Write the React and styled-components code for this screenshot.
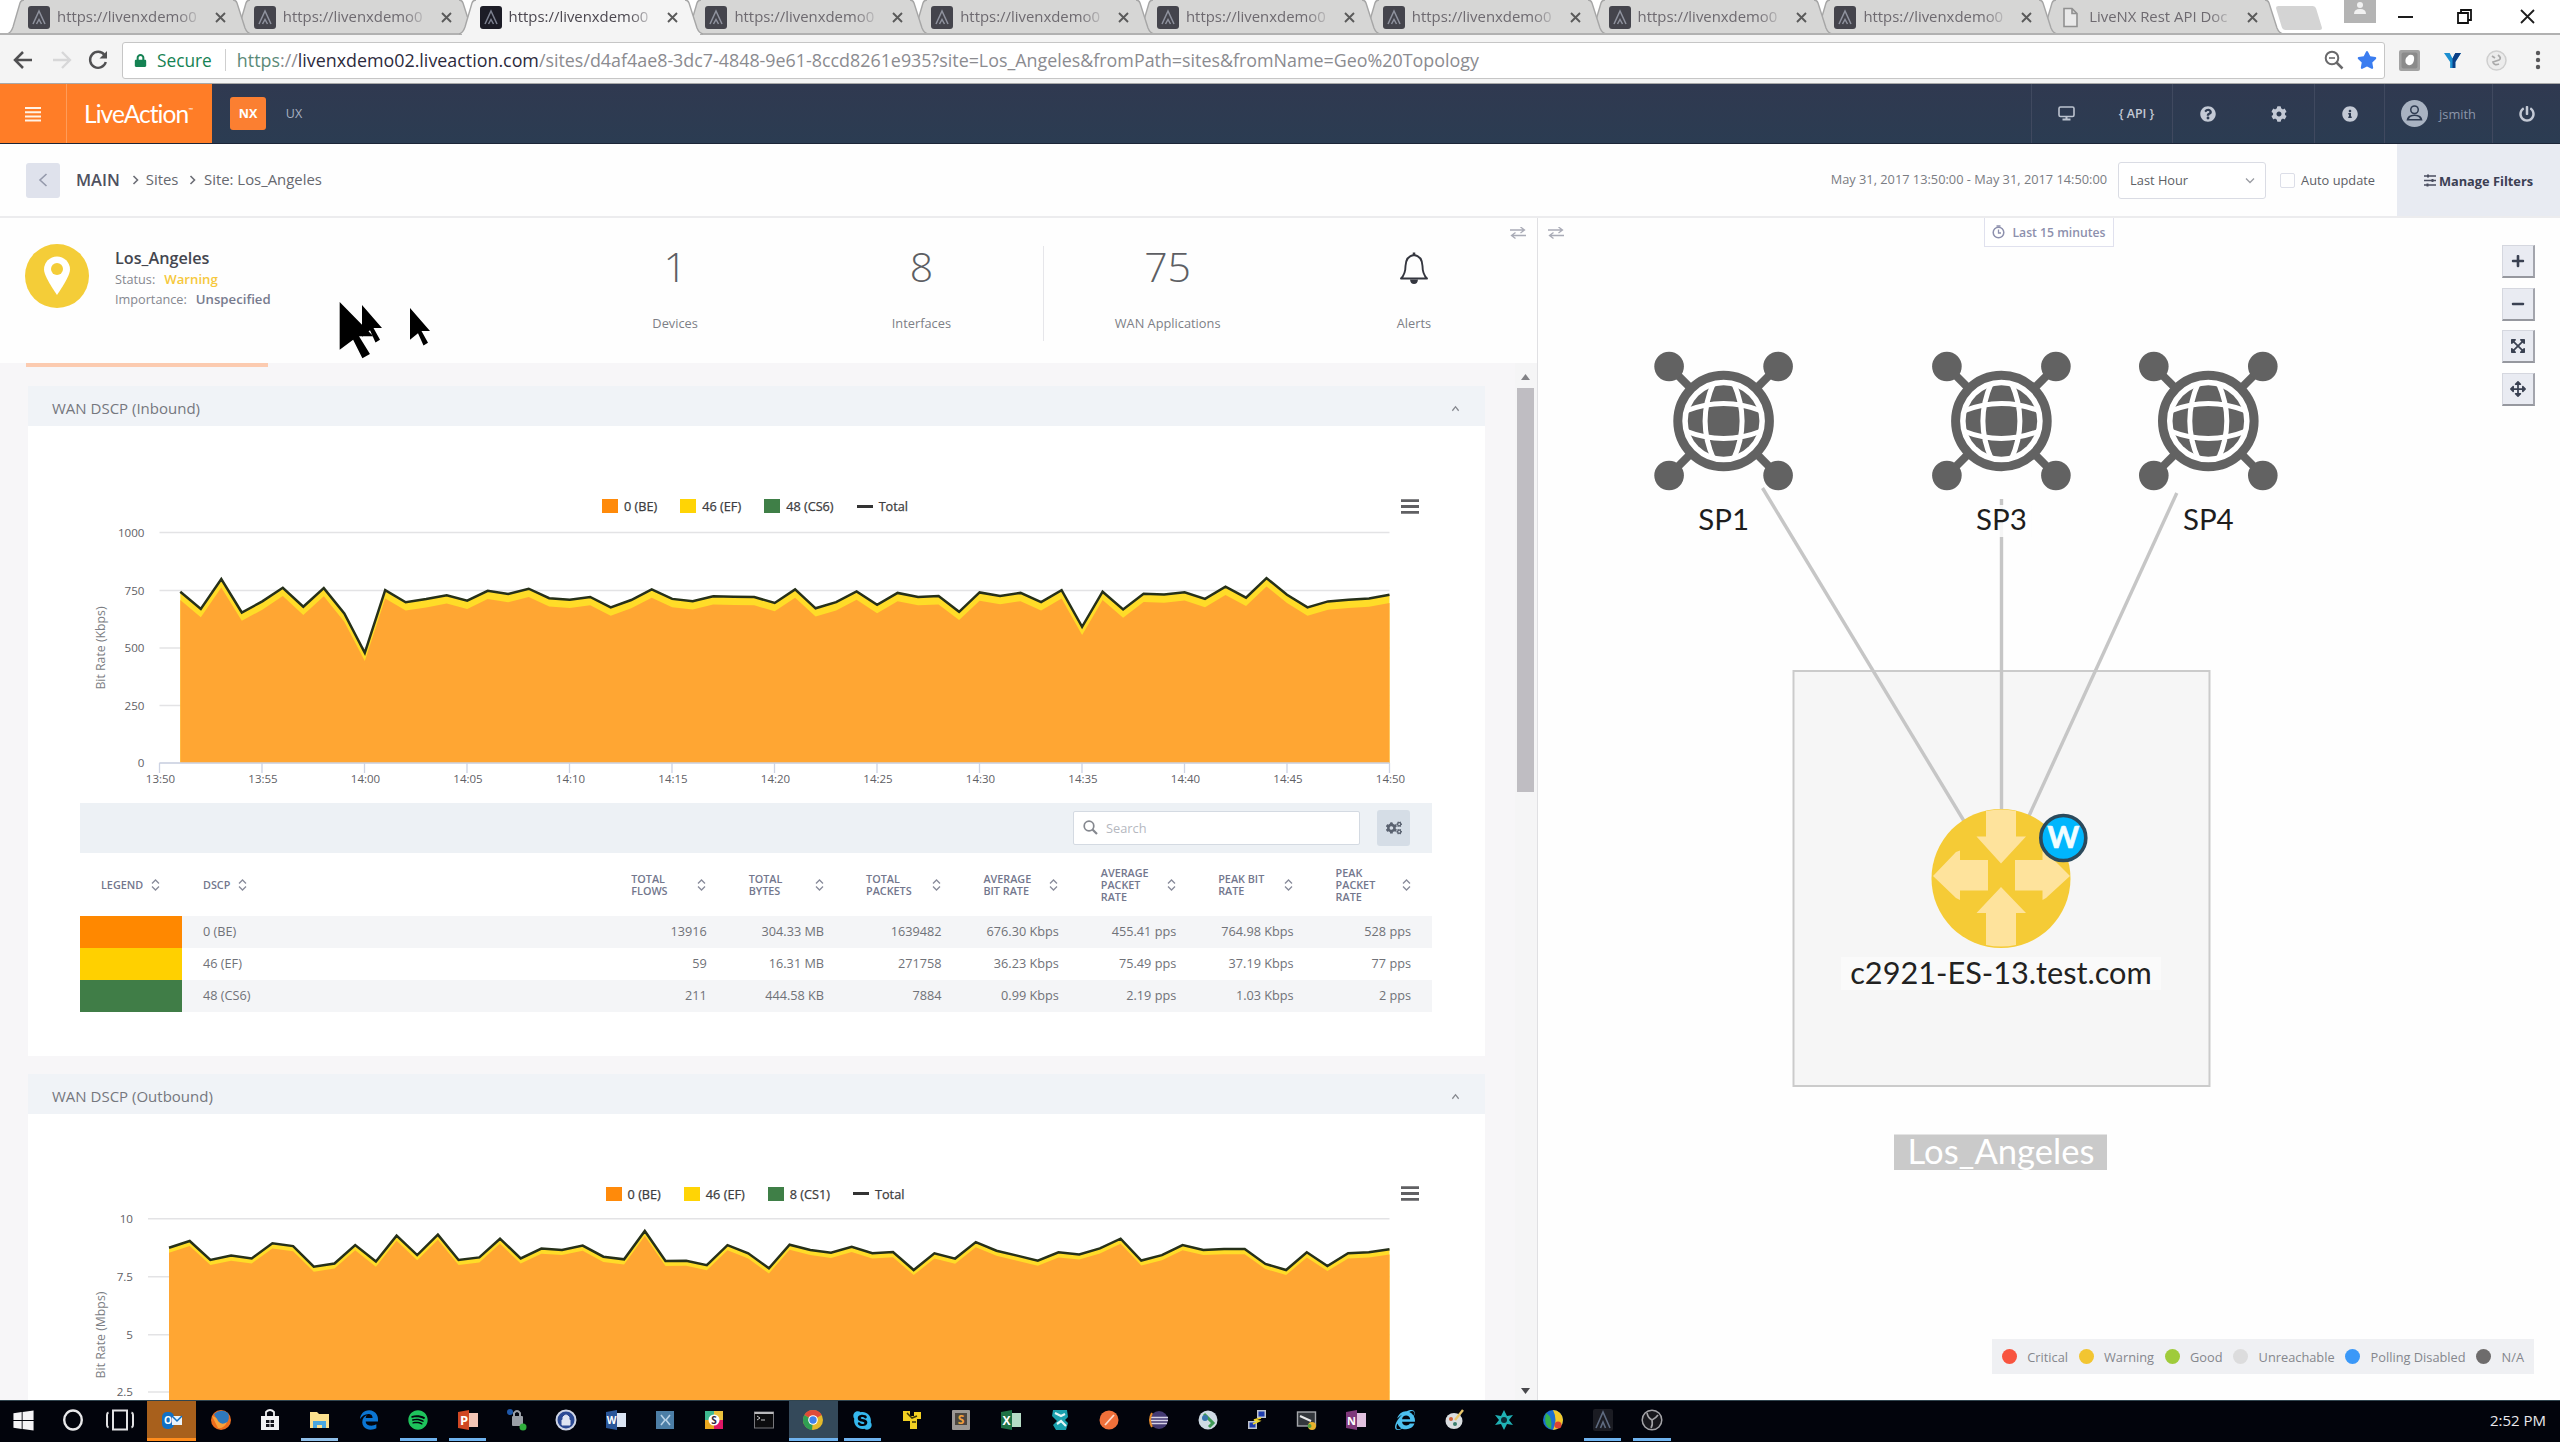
import React from 'react';
import styled, { createGlobalStyle, css } from 'styled-components';
import {
  FaLock, FaStar, FaQuestionCircle, FaCog, FaInfoCircle, FaPowerOff, FaCogs, FaPlus, FaMinus,
  FaExpandArrowsAlt, FaArrowsAlt, FaWindows, FaEdgeLegacy, FaSpotify, FaSkype, FaInternetExplorer,
} from 'react-icons/fa';

const Global = createGlobalStyle`
  *, *::before, *::after { box-sizing: border-box; }
  body { margin: 0; overflow: hidden; background: #fff; }
`;

const Screen = styled.div`
  position: relative;
  width: 2560px;
  height: 1442px;
  display: flex;
  flex-direction: column;
  overflow: hidden;
  background: #fefefe;
  color: #5d5f66;
  font-family: "Open Sans", "Noto Sans", sans-serif;
  font-size: 12.8px;
  white-space: nowrap;
`;

/* ---------- browser tabs ---------- */
const TabStrip = styled.div`
  flex: none;
  height: 35px;
  display: flex;
  padding-left: 7px;
  background: #fff;
  border-bottom: 2px solid #b1b1b1;
`;
const TabBox = styled.div`
  position: relative;
  flex: none;
  width: 225.8px;
  height: 34px;
  display: flex;
  align-items: center;
  padding-left: 21px;
  gap: 7px;
  z-index: ${(p) => p.$z};
  color: ${(p) => (p.$active ? '#4c4850' : '#6e6a70')};
`;
const TabShape = styled.svg`
  position: absolute;
  left: 0;
  top: 0;
  z-index: -1;
`;
const Favicon = styled.svg`
  flex: none;
  opacity: ${(p) => (p.$active ? 1 : 0.78)};
`;
const TabTitle = styled.span`
  width: 143px;
  height: 34px;
  font-size: 14.9px;
  line-height: 32px;
  mask-image: linear-gradient(90deg, #000 84%, rgba(0, 0, 0, 0.15) 100%);
`;
const TabClose = styled.svg`
  margin-left: 8px;
`;
const NewTab = styled.div`
  width: 40px;
  height: 24px;
  margin: 6px 0 0 14px;
  background: #d4d4d4;
  border-radius: 3px;
  transform: skewX(17deg);
`;
const WindowControls = styled.div`
  margin-left: auto;
  display: flex;
  align-items: flex-start;
  padding-right: 25px;
`;
const ProfileBox = styled.div`
  width: 32px;
  height: 23px;
  margin-right: 22px;
  background: #b4b4b4;
  display: flex;
  justify-content: center;
`;
const ControlIcon = styled.svg`
  margin: 9px ${(p) => p.$gap}px 0 0;
`;

/* ---------- browser toolbar ---------- */
const BrowserBar = styled.div`
  flex: none;
  height: 49px;
  display: flex;
  align-items: center;
  padding: 2px 15px 0 13px;
  background: #f4f4f4;
  border-bottom: 1px solid #a8a8a8;
`;
const NavIcon = styled.svg`
  flex: none;
  margin-right: ${(p) => p.$gap}px;
`;
const UrlField = styled.div`
  width: 2263px;
  height: 37px;
  display: flex;
  align-items: center;
  padding: 0 7px 0 11px;
  background: #fff;
  border: 1px solid #c6c6c6;
  border-radius: 3px;
  font-size: 17.88px;
`;
const SecureText = styled.span`
  margin-left: 10px;
  font-size: 17.3px;
  color: #158253;
`;
const UrlRule = styled.span`
  width: 1px;
  height: 22px;
  margin: 0 11px 0 13px;
  background: #cfcfcf;
`;
const UrlText = styled.span`
  color: #8b8b90;
  b { font-weight: 400; color: #2c2a3c; }
  i { font-style: normal; color: #5b8a78; }
`;
const FieldIcons = styled.div`
  margin-left: auto;
  display: flex;
  align-items: center;
  gap: 13px;
  color: #3b7df0;
`;
const Extensions = styled.div`
  margin-left: 14px;
  flex: 1;
  display: flex;
  align-items: center;
  justify-content: space-between;
`;

/* ---------- application header ---------- */
const AppHeader = styled.header`
  flex: none;
  height: 60px;
  display: flex;
  background: linear-gradient(#303950, #2b3c52);
  border-bottom: 1px solid #1c2537;
  color: #c3c9d5;
`;
const MenuButton = styled.div`
  width: 66px;
  display: flex;
  align-items: center;
  justify-content: center;
  background: #ff7d27;
`;
const Logo = styled.div`
  width: 146px;
  padding-left: 17px;
  background: #ff7d27;
  border-left: 1px solid #ff9c59;
  color: #fff;
  font: 400 24.5px/60px Lato, sans-serif;
  letter-spacing: -0.95px;
  sup { font-size: 6px; line-height: 0; vertical-align: 11px; letter-spacing: 0; }
`;
const ModeTab = styled.div`
  align-self: center;
  margin-left: ${(p) => (p.$active ? 18 : 10)}px;
  width: 36px;
  height: 33px;
  border-radius: 3px;
  background: ${(p) => (p.$active ? '#fb7f31' : 'transparent')};
  color: ${(p) => (p.$active ? '#fff' : '#a9b1c1')};
  font-size: 12.5px;
  font-weight: ${(p) => (p.$active ? 700 : 400)};
  line-height: 33px;
  text-align: center;
`;
const HeaderActions = styled.div`
  margin-left: auto;
  display: flex;
`;
const Action = styled.div`
  width: ${(p) => p.$w}px;
  display: flex;
  align-items: center;
  justify-content: center;
  gap: 11px;
  ${(p) => p.$rule && css`border-left: 1px solid #40495f;`}
`;
const ApiText = styled.span`
  font-size: 12.4px;
  font-weight: 600;
`;
const UserName = styled.span`
  color: #8c96aa;
`;

/* ---------- breadcrumb bar ---------- */
const CrumbBar = styled.div`
  flex: none;
  height: 74px;
  display: flex;
  align-items: center;
  padding-left: 26px;
  border-bottom: 2px solid #ececee;
`;
const BackButton = styled.div`
  width: 34px;
  height: 35px;
  margin-right: 16px;
  display: flex;
  align-items: center;
  justify-content: center;
  background: #dfe2ec;
  border-radius: 3px;
`;
const Crumb = styled.span`
  padding-bottom: 2px;
  font-size: ${(p) => (p.$main ? 16.4 : 14.9)}px;
  font-weight: ${(p) => (p.$main ? 600 : 400)};
  color: ${(p) => (p.$main ? '#4f5160' : '#66686f')};
`;
const CrumbArrow = styled.svg`
  margin: 0 ${(p) => p.$r}px 0 ${(p) => p.$l}px;
`;
const CrumbRight = styled.div`
  margin-left: auto;
  height: 100%;
  display: flex;
  align-items: center;
`;
const RangeText = styled.span`
  padding-bottom: 2px;
  color: #7a7c82;
`;
const Select = styled.div`
  width: 148px;
  height: 37px;
  margin: 0 14px 0 11px;
  padding: 0 10px 0 11px;
  display: flex;
  align-items: center;
  justify-content: space-between;
  border: 1px solid #dadce4;
  border-radius: 3px;
  background: #fff;
`;
const Checkbox = styled.span`
  width: 15px;
  height: 15px;
  margin-right: 6px;
  border: 1px solid #dcdee8;
  border-radius: 2px;
`;
const ManageFilters = styled.div`
  width: 163px;
  height: 100%;
  margin-left: 22px;
  display: flex;
  align-items: center;
  justify-content: center;
  gap: 3px;
  padding: 1px 0 0 0;
  background: #e8ebf2;
  color: #3c4054;
  font-size: 12.8px;
  font-weight: 700;
`;

/* ---------- site summary ---------- */
const Main = styled.main`
  flex: 1;
  min-height: 0;
  display: flex;
`;
const LeftPane = styled.section`
  position: relative;
  flex: none;
  width: 1538px;
  display: flex;
  flex-direction: column;
  border-right: 1px solid #e0e0e3;
`;
const Summary = styled.div`
  flex: none;
  height: 145px;
  display: flex;
  background: #fefefe;
`;
const SiteCard = styled.div`
  width: 552px;
  display: flex;
  padding: 26px 0 0 25px;
  gap: 26px;
`;
const SiteText = styled.div`
  padding-top: 3px;
  display: flex;
  flex-direction: column;
`;
const SiteName = styled.div`
  font-size: 16.2px;
  font-weight: 600;
  line-height: 22px;
  color: #44464f;
`;
const SiteLine = styled.div`
  display: flex;
  gap: 9px;
  font-size: 12.7px;
  line-height: 20px;
  color: #85878f;
`;
const SiteValue = styled.span`
  font-size: 13.2px;
  font-weight: 600;
  color: ${(p) => p.$color};
`;
const Stat = styled.div`
  flex: 1;
  display: flex;
  flex-direction: column;
  align-items: center;
  position: relative;
  color: #7d7f86;
  &:nth-child(4)::before {
    content: "";
    position: absolute;
    left: -2px;
    top: 28px;
    height: 95px;
    border-left: 1px solid #e6e6ea;
  }
`;
const StatValue = styled.div`
  height: 63px;
  margin-top: 20px;
  font-size: 41px;
  font-weight: 300;
  line-height: 56px;
  color: #5d5e63;
  svg { margin-top: 13px; display: block; }
`;
const StatLabel = styled.div`
  line-height: 44px;
`;
const SwapMark = styled.svg`
  position: absolute;
  top: 9px;
  ${(p) => (p.$side === 'right' ? css`right: 11px;` : css`left: 10px;`)}
`;
const Cursor = styled.svg`
  position: absolute;
  left: ${(p) => p.$x}px;
  top: ${(p) => p.$y}px;
  z-index: 30;
`;

/* ---------- scrolling reports ---------- */
const Scroller = styled.div`
  flex: 1;
  min-height: 0;
  display: flex;
  background: #f7f6f8;
`;
const Reports = styled.div`
  width: 1515px;
  padding-left: 28px;
  padding-right: 30px;
  overflow: hidden;
`;
const ActiveLine = styled.div`
  width: 242px;
  height: 4px;
  margin-left: -2px;
  background: #fccbb0;
`;
const Panel = styled.section`
  margin-top: ${(p) => p.$gap}px;
`;
const PanelHeader = styled.div`
  height: 40px;
  display: flex;
  align-items: center;
  justify-content: space-between;
  padding: 4px 25px 0 24px;
  background: #f0f3f7;
  color: #75777e;
  font-size: 15px;
`;
const PanelBody = styled.div`
  background: #fff;
  padding-bottom: 44px;
`;
const ChartHead = styled.div`
  height: ${(p) => p.$h}px;
  padding: 66px 66px 0 0;
  display: grid;
  grid-template-columns: 1fr auto 1fr;
  align-items: center;
`;
const Legend = styled.div`
  grid-column: 2;
  display: flex;
  gap: 23px;
  margin-left: 63px;
`;
const LegendItem = styled.div`
  display: flex;
  align-items: center;
  gap: 6px;
  color: #3d3d40;
  font-size: 12.7px;
  -webkit-text-stroke: 0.25px #3d3d40;
`;
const Swatch = styled.i`
  width: 16px;
  height: ${(p) => (p.$line ? 3 : 14)}px;
  background: ${(p) => p.$color};
`;
const ChartMenu = styled.svg`
  justify-self: end;
`;
const Plot = styled.svg`
  display: block;
  font-family: "Open Sans", sans-serif;
`;

/* ---------- table ---------- */
const TableBox = styled.div`
  margin: 0 53px 0 52px;
`;
const TableTools = styled.div`
  height: 50px;
  display: flex;
  align-items: center;
  justify-content: flex-end;
  padding-right: 22px;
  gap: 17px;
  background: #edf1f5;
`;
const SearchBox = styled.div`
  width: 287px;
  height: 34px;
  padding: 0 0 1px 9px;
  display: flex;
  align-items: center;
  gap: 8px;
  background: #fff;
  border: 1px solid #d4dae2;
  border-radius: 2px;
  color: #b5b8bf;
`;
const GearButton = styled.div`
  width: 33px;
  height: 36px;
  display: flex;
  align-items: center;
  justify-content: center;
  background: #d5dde6;
  border-radius: 3px;
  color: #5a6270;
`;
const gridCols = css`
  display: grid;
  grid-template-columns: 102px 1fr repeat(7, 117.4px);
`;
const HeadRow = styled.div`
  ${gridCols}
  height: 63px;
  align-items: center;
`;
const HeadCell = styled.div`
  display: flex;
  align-items: center;
  justify-content: ${(p) => (p.$spread ? 'space-between' : 'flex-start')};
  gap: 8px;
  padding: 1px 21.5px 0 21px;
  color: #73778d;
  font-size: 10.8px;
  font-weight: 600;
  line-height: 12px;
`;
const HeadText = styled.span`
  white-space: normal;
  max-width: 54px;
`;
const Row = styled.div`
  ${gridCols}
  height: 32px;
  line-height: 30px;
  background: ${(p) => (p.$shade ? '#f4f5f7' : '#fff')};
  color: #707278;
  font-size: 12.7px;
`;
const ColorCell = styled.div`
  background: ${(p) => p.$color};
`;
const Cell = styled.div`
  padding: 0 21px;
  text-align: ${(p) => (p.$right ? 'right' : 'left')};
`;

/* ---------- scrollbar ---------- */
const ScrollTrack = styled.div`
  width: 22px;
  display: flex;
  flex-direction: column;
  align-items: center;
  background: #f5f5f6;
  padding: 11px 2px 6px 0;
`;
const Thumb = styled.div`
  width: 17px;
  height: 404px;
  margin: 8px 0 auto 0;
  background: #bfbdc2;
`;

/* ---------- topology ---------- */
const RightPane = styled.section`
  position: relative;
  flex: 1;
  background: #fefefe;
`;
const Topology = styled.svg`
  display: block;
  font-family: Lato, sans-serif;
`;
const RangeBadge = styled.div`
  position: absolute;
  left: 446px;
  top: 0;
  width: 130px;
  height: 29px;
  display: flex;
  align-items: center;
  justify-content: center;
  gap: 7px;
  background: #fff;
  border: 1px solid #e0e1ee;
  border-top: 0;
  color: #8d90ad;
  font-size: 12.2px;
  font-weight: 600;
`;
const ZoomStack = styled.div`
  position: absolute;
  right: 25px;
  top: 27px;
  display: flex;
  flex-direction: column;
  gap: 9.7px;
`;
const ZoomButton = styled.div`
  width: 33px;
  height: 33px;
  display: flex;
  align-items: center;
  justify-content: center;
  background: #e9ebf2;
  border: 1px solid #d5d7df;
  border-right: 2px solid #a3a5ad;
  border-bottom: 2px solid #96989f;
  color: #3a4152;
`;
const StatusLegend = styled.div`
  position: absolute;
  right: 26px;
  bottom: 26px;
  height: 35px;
  display: flex;
  align-items: center;
  gap: 10.8px;
  padding: 0 10px;
  background: #eff0f3;
  color: #85878d;
`;
const StatusItem = styled.div`
  display: flex;
  align-items: center;
  gap: 10.2px;
  &::before {
    content: "";
    width: 15px;
    height: 15px;
    border-radius: 50%;
    background: ${(p) => p.$color};
  }
`;

/* ---------- taskbar ---------- */
const Taskbar = styled.footer`
  flex: none;
  height: 42px;
  display: flex;
  background: #02040c;
  border-top: 1px solid #31454f;
  padding-right: 14px;
`;
const TaskItem = styled.div`
  flex: none;
  width: 49.35px;
  height: 40px;
  margin-left: ${(p) => (p.$first ? -1 : 0)}px;
  padding-bottom: 2px;
  display: flex;
  align-items: center;
  justify-content: center;
  position: relative;
  background: ${(p) => p.$bg || 'transparent'};
  &::after {
    content: "";
    position: absolute;
    bottom: 0;
    left: ${(p) => (p.$bg ? 0 : 6)}px;
    right: ${(p) => (p.$bg ? 0 : 6)}px;
    height: 3px;
    background: ${(p) => p.$line || 'transparent'};
  }
`;
const Clock = styled.div`
  margin-left: auto;
  color: #e9e9ec;
  font-size: 15px;
  line-height: 38px;
`;

/* ---------- data ---------- */
const TABS = Array.from({ length: 9 }, () => 'https://livenxdemo0');

const INBOUND = [743, 668, 798, 653, 701, 760, 678, 759, 649, 478, 750, 697, 711, 728, 704, 747, 733, 756, 715, 708, 720, 675, 707, 753, 712, 702, 723, 721, 720, 694, 753, 671, 698, 744, 686, 738, 720, 724, 656, 740, 725, 738, 698, 750, 591, 743, 666, 734, 731, 741, 712, 765, 717, 802, 730, 675, 701, 708, 714, 730];
const OUTBOUND = [8.75, 9.04, 8.22, 8.41, 8.29, 8.94, 8.82, 7.93, 8.07, 8.86, 8.15, 9.27, 8.43, 9.31, 8.22, 8.33, 9.14, 8.29, 8.71, 8.65, 8.84, 8.36, 8.25, 9.47, 8.18, 8.19, 8.0, 8.86, 8.51, 7.86, 8.88, 8.65, 8.53, 8.79, 8.51, 8.56, 7.79, 8.51, 8.28, 8.99, 8.62, 8.41, 8.19, 8.55, 8.46, 8.72, 9.14, 8.2, 8.43, 8.86, 8.65, 8.69, 8.69, 8.05, 7.79, 8.55, 7.96, 8.51, 8.55, 8.68];

const ROWS = [
  ['#ff8800', '0 (BE)', '13916', '304.33 MB', '1639482', '676.30 Kbps', '455.41 pps', '764.98 Kbps', '528 pps'],
  ['#ffd000', '46 (EF)', '59', '16.31 MB', '271758', '36.23 Kbps', '75.49 pps', '37.19 Kbps', '77 pps'],
  ['#407d47', '48 (CS6)', '211', '444.58 KB', '7884', '0.99 Kbps', '2.19 pps', '1.03 Kbps', '2 pps'],
];
const COLUMNS = ['TOTAL FLOWS', 'TOTAL BYTES', 'TOTAL PACKETS', 'AVERAGE BIT RATE', 'AVERAGE PACKET RATE', 'PEAK BIT RATE', 'PEAK PACKET RATE'];

const STATUSES = [['Critical', '#f8543f'], ['Warning', '#f2c531'], ['Good', '#9fcb3b'], ['Unreachable', '#dcdcdd'], ['Polling Disabled', '#3a98f8'], ['N/A', '#6e6c6c']];

/* ---------- pieces ---------- */
const AppFavicon = ({ active }) => (
  <Favicon width="22" height="23" viewBox="0 0 22 23" $active={active}>
    <rect width="22" height="23" rx="3" fill="#1c1c26" />
    <path d="M5 18 L11 5 L17 18 M8.5 18 L11 13.5 L13.5 18" fill="none" stroke="#7c8090" strokeWidth="1.5" />
  </Favicon>
);
const DocFavicon = () => (
  <Favicon width="22" height="23" viewBox="0 0 22 23">
    <path d="M4 2.5 H12 L17 7.500 V20.500 H4 Z M12 2.500 V7.500 H17" fill="#efefef" stroke="#7d7d7d" strokeWidth="1.6" />
  </Favicon>
);
const BrowserTab = ({ title, active, doc, z }) => (
  <TabBox $active={active} $z={z}>
    <TabShape width="244" height="35" viewBox="0 0 244 35">
      <path d="M0 34 C4 33 5 30 6 27 L13 3 Q14 0 17 0 H226 Q229 0 230 3 L238 28 Q240 33 244 34 Z" fill={active ? '#f4f4f4' : '#d6d6d5'} />
      <path d="M0 34 C4 33 5 30 6 27 L13 3 Q14 0 17 0 M226 0 Q229 0 230 3 L238 28 Q240 33 244 34" fill="none" stroke="#a6a6a6" strokeWidth="1.4" />
      {active ? <path d="M3 34.500 H241" stroke="#f4f4f4" strokeWidth="3" /> : <path d="M0 34 H244" stroke="#b1b1b1" strokeWidth="2" />}
    </TabShape>
    {doc ? <DocFavicon /> : <AppFavicon active={active} />}
    <TabTitle>{title}</TabTitle>
    <TabClose width="11" height="11" viewBox="0 0 11 11"><path d="M1 1 L10 10 M10 1 L1 10" stroke="#5a5a5a" strokeWidth="1.9" /></TabClose>
  </TabBox>
);

const Sort = () => (
  <svg width="9" height="12" viewBox="0 0 9 12"><path d="M1 4.500 L4.500 1 L8 4.500 M1 7.500 L4.500 11 L8 7.500" fill="none" stroke="#888b9a" strokeWidth="1.3" /></svg>
);
const Caret = () => (
  <svg width="9" height="7" viewBox="0 0 10 7"><path d="M1.500 6 L5 1.500 L8.500 6" fill="none" stroke="#85878e" strokeWidth="1.4" /></svg>
);
const Swap = () => (
  <>
    <path d="M0 3 H14 M10.500 0 L14.500 3 L10.500 6" fill="none" stroke="#a9abb6" strokeWidth="1.3" />
    <path d="M16 8.500 H2 M5.500 5.500 L1.500 8.500 L5.500 11.500" fill="none" stroke="#a9abb6" strokeWidth="1.3" />
  </>
);

const ChartLegend = ({ items, h }) => (
  <ChartHead $h={h}>
    <Legend>
      {items.map(([label, color]) => (
        <LegendItem key={label}><Swatch $color={color} $line={label === 'Total'} />{label}</LegendItem>
      ))}
    </Legend>
    <ChartMenu width="18" height="15" viewBox="0 0 18 15"><path d="M0 1.700 H18 M0 7.500 H18 M0 13.300 H18" stroke="#606063" strokeWidth="2.800" /></ChartMenu>
  </ChartHead>
);

function AreaPlot({ top, height, axisX, dataX, endX, zeroY, unit, values, band, yTicks, xTicks, yTitle, yTitleY, labelX, baseline }) {
  const step = (endX - dataX) / (values.length - 1);
  const pts = (shift) => values.map((v, i) => `${(dataX + i * step).toFixed(1)},${(zeroY - (v - shift) * unit).toFixed(1)}`);
  const close = ` ${endX},${zeroY} ${dataX},${zeroY}`;
  return (
    <Plot width="1457" height={height} viewBox={`28 ${top} 1457 ${height}`}>
      {yTicks.map(([label, y]) => (
        <g key={label}>
          <line x1={axisX} x2={endX} y1={y} y2={y} stroke="#e3e3e5" strokeWidth="1.5" />
          <text x={labelX} y={y + 4} textAnchor="end" fontSize="11.6" fill="#5f6166">{label}</text>
        </g>
      ))}
      <polygon points={pts(0).join(' ') + close} fill="#ffdc28" />
      <polygon points={pts(band).join(' ') + close} fill="#ffa633" />
      <polyline points={pts(0).join(' ')} fill="none" stroke="#26301a" strokeWidth="2.5" strokeLinejoin="miter" />
      {baseline && <line x1={axisX} x2={endX} y1={zeroY} y2={zeroY} stroke="#cdd3e4" strokeWidth="1.5" />}
      {xTicks.map((label, i) => {
        const x = axisX + (i * (endX - axisX)) / (xTicks.length - 1);
        return (
          <g key={label}>
            <line x1={x} x2={x} y1={zeroY} y2={zeroY + 10} stroke="#cdd3e4" strokeWidth="1.3" />
            <text x={x + 1} y={zeroY + 20} textAnchor="middle" fontSize="11.5" fill="#5f6166">{label}</text>
          </g>
        );
      })}
      <text transform={`translate(105 ${yTitleY}) rotate(-90)`} textAnchor="middle" fontSize="12.3" fill="#7c7e84">{yTitle}</text>
    </Plot>
  );
}

const Provider = ({ x, label, boxed }) => (
  <g transform={`translate(${x} 421)`}>
    {[[-54.5, -54.5], [54.5, -54.5], [-54.5, 54.5], [54.5, 54.5]].map(([dx, dy]) => (
      <g key={`${dx}${dy}`}>
        <line x1={dx} y1={dy} x2={dx * 0.6} y2={dy * 0.6} stroke="#626262" strokeWidth="8" />
        <circle cx={dx} cy={dy} r="14.800" fill="#626262" />
      </g>
    ))}
    <circle r="45.800" fill="#fff" stroke="#626262" strokeWidth="9" />
    <circle r="35.800" fill="#626262" />
    <g fill="none" stroke="#fff" strokeWidth="5">
      <path d="M-10 -38 Q-27 0 -10 38 M10 -38 Q27 0 10 38 M-38 -10 Q0 -25 38 -10 M-38 10 Q0 25 38 10" />
    </g>
    {boxed && <rect x="-30" y="84" width="60" height="32" fill="#fefefe" fillOpacity="0.85" />}
    <text y="109" textAnchor="middle" fontSize="29.500" fill="#1d1d1d">{label}</text>
  </g>
);

const TopologyMap = () => (
  <Topology width="1022" height="1182" viewBox="1538 218 1022 1182">
    <rect x="1793.500" y="671" width="416" height="415" fill="#f6f6f6" stroke="#cbcbcb" strokeWidth="2" />
    <g stroke="#c6c6c6" strokeWidth="3.4">
      <line x1="1762.500" y1="488" x2="1967" y2="826" />
      <line x1="2001.500" y1="499" x2="2001.500" y2="812" />
      <line x1="2176.800" y1="493" x2="2028" y2="818" />
    </g>
    <Provider x={1723.6} label="SP1" />
    <Provider x={2001.4} label="SP3" boxed />
    <Provider x={2208.3} label="SP4" />
    <circle cx="2001" cy="878.500" r="69.500" fill="#f5cb36" />
    <g fill="#fee39c">
      <path d="M1986 811 Q2001 808 2016 811 V836.500 H2026 L2001 863.500 L1976.500 836.500 H1986 Z" />
      <path d="M1986 945 Q2001 948 2016 945 V913 H2026 L2001 887 L1976.500 913 H1986 Z" />
      <path d="M1933 876 L1956 852 L1960 850.500 V860 H1988 V890.500 H1960 V900 L1956 898 Z" />
      <path d="M2070 876 L2046 852 L2042.500 850.500 V860 H2015 V890.500 H2042.500 V900 L2046 898 Z" />
    </g>
    <circle cx="2063.300" cy="838" r="22.500" fill="#00b6fd" stroke="#2b4a5c" strokeWidth="3.600" />
    <text x="2063.300" y="847.500" textAnchor="middle" fontSize="30.500" fontWeight="700" fill="#f2fdff" stroke="#f2fdff" strokeWidth="0.600">W</text>
    <rect x="1841" y="957" width="320" height="33" fill="#fafafa" />
    <text x="2001" y="983.500" textAnchor="middle" fontSize="30.700" fill="#222">c2921-ES-13.test.com</text>
    <rect x="1894" y="1134.500" width="213" height="35.500" fill="#cacaca" />
    <text x="2001" y="1163.500" textAnchor="middle" fontSize="34.600" fill="#fff">Los_Angeles</text>
  </Topology>
);

const CursorShape = ({ x, y, w, h }) => (
  <Cursor $x={x} $y={y} width={w} height={h} viewBox="0 0 22 34" preserveAspectRatio="none">
    <path d="M1 0 L21 20.500 H12.500 L19 31 L14.500 33.500 L9 22.500 L1 28.500 Z" fill="#000" />
  </Cursor>
);

const S = ({ children, w = 24 }) => <svg width={w} height="24" viewBox="0 0 24 24">{children}</svg>;
const glyph = (x, y, size, fill, text) => (
  <text x={x} y={y} fontSize={size} fontWeight="700" fill={fill} textAnchor="middle" fontFamily="Open Sans, sans-serif">{text}</text>
);
const BLUE = '#6fb3ef';
const TASKS = [
  { icon: <FaWindows size={23} color="#f4f4f6" /> },
  { icon: <S><ellipse cx="12" cy="12" rx="8.800" ry="9.500" fill="none" stroke="#e8e8ea" strokeWidth="2.400" /></S> },
  { icon: <S w={32}><path d="M3 2.500 H17 V21.500 H3 Z M-1.500 4.500 Q-3 5 -3 7 V17 Q-3 19 -1.500 19.500 M21.500 4.500 Q23 5 23 7 V17 Q23 19 21.500 19.500" fill="none" stroke="#e2e2e4" strokeWidth="2" /></S> },
  { bg: '#a8601c', line: '#ff8c1c', icon: <S><rect x="2" y="4" width="12" height="17" rx="5" fill="#1170c4" /><rect x="12" y="8" width="10" height="9" fill="#eaf3fb" /><path d="M12 8 L17 13 L22 8" fill="none" stroke="#1170c4" strokeWidth="1.500" />{glyph(8, 16, 10, '#fff', 'O')}</S> },
  { icon: <S><circle cx="12" cy="12" r="10" fill="#ee6d1d" /><path d="M5 6 Q12 0 19 5 Q22 12 16 16 Q10 17 8 12 Z" fill="#2f79bd" /><path d="M3 8 Q8 9 9 13 Q13 18 18 14 Q15 21 9 20 Z" fill="#f9a13a" /></S> },
  { icon: <S><path d="M3 8 H21 V22 H3 Z" fill="#f1f1f3" /><path d="M8 8 V4 Q12 0 16 4 V8" fill="none" stroke="#f1f1f3" strokeWidth="1.800" /><path d="M8 12 H11.500 V15 H8 Z M12.500 12 H16 V15 H12.500 Z M8 16 H11.500 V19 H8 Z M12.500 16 H16 V19 H12.500 Z" fill="#14151c" /></S> },
  { line: '#8fbfe9', icon: <S><path d="M2 4 H9 L11 6 H21 V20 H2 Z" fill="#fbe08e" /><path d="M5 13 H18 V20 H14 V17 H9 V20 H5 Z" fill="#4aa7e0" /></S> },
  { icon: <FaEdgeLegacy size={20} color="#0b75d2" /> },
  { line: BLUE, icon: <FaSpotify size={20} color="#1ec45c" /> },
  { line: BLUE, icon: <S><path d="M2 4 L13 2 V22 L2 20 Z" fill="#d04724" /><rect x="13" y="5" width="9" height="14" fill="#f3c6b6" />{glyph(8, 17, 13, '#fff', 'P')}</S> },
  { icon: <S><rect x="7" y="8" width="11" height="10" rx="1" fill="#9a9fa6" /><path d="M9 8 V5 Q12 1 15 5 V8" fill="none" stroke="#9a9fa6" strokeWidth="2" /><circle cx="5" cy="4" r="3" fill="#1e57a8" /><circle cx="18" cy="19" r="3.500" fill="#2fae3c" /></S> },
  { icon: <S><circle cx="12" cy="12" r="9.500" fill="#2c4a94" stroke="#cfd6e6" strokeWidth="2" /><path d="M9 12 V9 Q12 5 15 9 V12 M8 12 H16 V17 H8 Z" fill="#dfe5f2" stroke="#dfe5f2" /></S> },
  { icon: <S><path d="M2 4 L13 2 V22 L2 20 Z" fill="#2a5699" /><rect x="13" y="5" width="9" height="14" fill="#dbe5f4" />{glyph(7.5, 16, 10, '#fff', 'W')}</S> },
  { icon: <S><rect x="3" y="3" width="18" height="18" fill="#4c7ea6" /><path d="M8 7 L12 12 L8 17 M17 7 L13 12 L17 17" fill="none" stroke="#b9d2e6" strokeWidth="1.600" /></S> },
  { icon: <S><rect x="3" y="3" width="9" height="9" fill="#3eb991" /><rect x="12" y="3" width="9" height="9" fill="#ebc13d" /><rect x="3" y="12" width="9" height="9" fill="#e9a820" /><rect x="12" y="12" width="9" height="9" fill="#e01765" /><circle cx="12" cy="12" r="5.500" fill="#fff" />{glyph(12, 16, 10, '#33263a', 'S')}</S> },
  { icon: <S><rect x="2.500" y="4" width="19" height="16" fill="#0c0c0e" stroke="#77777b" /><path d="M2.500 5 H21.500" stroke="#b9b9bc" strokeWidth="2" /><path d="M5 8 L8 10 L5 12 M9 12 H13" stroke="#c5c5c8" fill="none" /></S> },
  { bg: '#34495a', line: BLUE, icon: <S><circle cx="12" cy="12" r="10" fill="#e3b92b" /><path d="M12 12 L3.300 7 A10 10 0 0 1 20.700 7 Z" fill="#dd4b39" /><path d="M12 12 L3.300 7 A10 10 0 0 0 11 22 Z" fill="#2f9e53" /><circle cx="12" cy="12" r="4.800" fill="#fff" /><circle cx="12" cy="12" r="3.700" fill="#3f80ea" /></S> },
  { line: BLUE, icon: <FaSkype size={21} color="#35b8ee" /> },
  { icon: <S><path d="M3 3 H10 V8 H14 V4 H21 V11 H17 V21 H10 V13 H3 Z" fill="#f2d022" /><path d="M7 5 L12 10 L17 8 M12 14 H16" fill="none" stroke="#3b3508" strokeWidth="1.500" /></S> },
  { icon: <S><rect x="3" y="2" width="18" height="20" rx="1" fill="#9c9894" /><rect x="6" y="5" width="12" height="12" fill="#4b4640" />{glyph(12, 16, 12, '#f0a13c', 'S')}</S> },
  { icon: <S><path d="M2 4 L13 2 V22 L2 20 Z" fill="#1e7145" /><rect x="13" y="5" width="9" height="14" fill="#b5dcc5" />{glyph(7.5, 16.5, 12, '#fff', 'X')}</S> },
  { icon: <S><path d="M5 2 H19 L20 9 L17 12 L20 15 L18 22 H8 L5 17 L9 13 L4 8 Z" fill="#19a0ad" /><path d="M7 5 L13 8 L17 6 M9 16 L13 13 L18 18" fill="none" stroke="#e2f6f7" strokeWidth="2.200" /></S> },
  { icon: <S><circle cx="12" cy="12" r="9.500" fill="#f0703a" /><path d="M8 17 L17 7" stroke="#fbd9c9" strokeWidth="1.800" /></S> },
  { icon: <S><circle cx="12" cy="12" r="9" fill="#433a72" /><path d="M3 9.500 H21 M3 12.500 H21 M4 15.500 H20" stroke="#d6d2e6" strokeWidth="1.300" /><path d="M5 5 Q1 12 5 19" stroke="#e58b2c" strokeWidth="2" fill="none" /></S> },
  { icon: <S><circle cx="12" cy="12" r="9.500" fill="#cfdbe4" /><path d="M8 6 L17 15 L13 19" fill="none" stroke="#3f9a55" strokeWidth="3" /><circle cx="9" cy="10" r="3" fill="#3876ae" /></S> },
  { icon: <S><rect x="12" y="2" width="9" height="8" fill="#bfc4ce" /><rect x="3" y="13" width="9" height="8" fill="#bfc4ce" /><rect x="13.500" y="3.500" width="6" height="5" fill="#1d3cae" /><rect x="4.500" y="14.500" width="6" height="5" fill="#1d3cae" /><path d="M16 10 L9 12 L14 13 L8 16" stroke="#f2d62c" strokeWidth="1.700" fill="none" /></S> },
  { icon: <S><rect x="2.500" y="4" width="18" height="14" fill="#33373c" stroke="#a4a6aa" strokeWidth="1.400" /><path d="M5 8 L16 13" stroke="#e9e9ea" strokeWidth="2" /><circle cx="17" cy="18" r="4" fill="#e8b12c" /><circle cx="14.500" cy="18" r="2" fill="#4fa13f" /></S> },
  { icon: <S><path d="M2 4 L13 2 V22 L2 20 Z" fill="#80397b" /><rect x="13" y="5" width="9" height="14" fill="#e2c2df" />{glyph(7.5, 16.5, 11, '#fff', 'N')}</S> },
  { icon: <FaInternetExplorer size={20} color="#4cc0ef" /> },
  { icon: <S><ellipse cx="11" cy="13" rx="8.500" ry="8" fill="#d9dde0" /><circle cx="8" cy="11" r="2" fill="#cf5b35" /><circle cx="12" cy="16" r="2" fill="#3c7f6d" /><path d="M12 12 L20 2" stroke="#e8c76c" strokeWidth="2.400" /></S> },
  { icon: <S><path d="M12 2 L15 8 L21 7 L17 12 L21 17 L15 16 L12 22 L9 16 L3 17 L7 12 L3 7 L9 8 Z" fill="#1fb1b5" /><circle cx="12" cy="12" r="3" fill="#0a2c36" /></S> },
  { icon: <S><circle cx="12" cy="12" r="10" fill="#1c6fd0" /><path d="M12 2 A10 10 0 0 1 12 22 Q17 12 12 2" fill="#f3c929" /><path d="M5 5 Q12 9 10 21 Q2 18 5 5" fill="#34b24d" /><circle cx="17" cy="17" r="3.500" fill="#dd4433" /></S> },
  { line: BLUE, icon: <S><rect x="2" y="1" width="20" height="22" rx="2" fill="#1b1c23" /><path d="M5 20 L12 4 L19 20 M9.500 20 L12 14 L14.500 20" fill="none" stroke="#5f6b80" strokeWidth="1.600" /></S> },
  { line: BLUE, icon: <S><circle cx="12" cy="12" r="9.800" fill="#17171c" stroke="#a3a3a7" strokeWidth="1.500" /><path d="M12 12 Q8 10 7 5 M12 12 Q16 10 18 7 M12 12 Q13 17 11 20" stroke="#a3a3a7" strokeWidth="1.600" fill="none" /></S> },
];

export default function App() {
  return (
    <Screen>
      <Global />
      <TabStrip>
        {TABS.map((t, i) => <BrowserTab key={i} title={t} active={i === 2} z={i === 2 ? 20 : 12 - i} />)}
        <BrowserTab title="LiveNX Rest API Doc" doc z={1} />
        <NewTab />
        <WindowControls>
          <ProfileBox><svg width="14" height="16" viewBox="0 0 14 16"><circle cx="7" cy="5" r="3" fill="#f1f1f1" /><path d="M1 14 Q1 9 7 9 Q13 9 13 14 Z" fill="#f1f1f1" /></svg></ProfileBox>
          <ControlIcon $gap={44} width="15" height="16" viewBox="0 0 15 16"><path d="M0 8 H15" stroke="#1d1d1d" strokeWidth="2" /></ControlIcon>
          <ControlIcon $gap={48} width="15" height="15" viewBox="0 0 15 15"><path d="M1 4 H11 V14 H1 Z M4 4 V1 H14 V11 H11" fill="none" stroke="#111" strokeWidth="1.800" /></ControlIcon>
          <ControlIcon $gap={0} width="15" height="15" viewBox="0 0 15 15"><path d="M1 1 L14 14 M14 1 L1 14" stroke="#1d1d1d" strokeWidth="1.800" /></ControlIcon>
        </WindowControls>
      </TabStrip>

      <BrowserBar>
        <NavIcon $gap={19} width="20" height="20" viewBox="0 0 20 20"><path d="M19 10 H2.500 M10 2 L2 10 L10 18" fill="none" stroke="#505052" strokeWidth="2.500" /></NavIcon>
        <NavIcon $gap={16} width="20" height="20" viewBox="0 0 20 20"><path d="M1 10 H17.500 M10 2 L18 10 L10 18" fill="none" stroke="#d7d7d8" strokeWidth="2.300" /></NavIcon>
        <NavIcon $gap={14} width="20" height="20" viewBox="0 0 20 20"><path d="M16.500 5 A8 8 0 1 0 17.800 12" fill="none" stroke="#505052" strokeWidth="2.400" /><path d="M19 1 V8.500 H11.500 Z" fill="#505052" /></NavIcon>
        <UrlField>
          <FaLock size={13} color="#158253" />
          <SecureText>Secure</SecureText>
          <UrlRule />
          <UrlText><i>https</i>://<b>livenxdemo02.liveaction.com</b>/sites/d4af4ae8-3dc7-4848-9e61-8ccd8261e935?site=Los_Angeles&amp;fromPath=sites&amp;fromName=Geo%20Topology</UrlText>
          <FieldIcons>
            <svg width="20" height="20" viewBox="0 0 20 20"><circle cx="8" cy="8" r="6.300" fill="none" stroke="#69696b" strokeWidth="2" /><path d="M5 8 H11" stroke="#69696b" strokeWidth="1.600" /><path d="M12.500 12.500 L18.500 18.500" stroke="#69696b" strokeWidth="2.500" /></svg>
            <FaStar size={20} />
          </FieldIcons>
        </UrlField>
        <Extensions>
          <svg width="21" height="21" viewBox="0 0 21 21"><rect width="21" height="21" rx="2" fill="#a2a2a2" /><rect x="2.500" y="2.500" width="16" height="16" rx="2" fill="#8b8b8b" /><path d="M10 5 Q16 4 15 10 Q14 16 9 15 Q5 13 7 8 Z" fill="#fff" /></svg>
          <svg width="17" height="17" viewBox="0 0 18 18"><path d="M0 1 H6 L9 7 L12 1 H18 L12 10.500 V17 H6.500 V10.500 Z" fill="#1b8fd0" /><path d="M9 7 L12 1 H18 L12 10.500 V17 H9 Z" fill="#0b3f86" /></svg>
          <svg width="21" height="21" viewBox="0 0 21 21"><circle cx="10.500" cy="10.500" r="9.500" fill="#ececec" stroke="#cfcfcf" strokeWidth="1.500" /><path d="M6 6 L9 8 M12 5 Q16 8 13 10 L7 12 Q8 16 13 14" fill="none" stroke="#a9a9a9" strokeWidth="1.800" /></svg>
          <svg width="14" height="20" viewBox="0 0 14 20"><g fill="#58585a"><circle cx="7" cy="3" r="2.200" /><circle cx="7" cy="10" r="2.200" /><circle cx="7" cy="17" r="2.200" /></g></svg>
        </Extensions>
      </BrowserBar>

      <AppHeader>
        <MenuButton><svg width="16" height="16" viewBox="0 0 16 16"><path d="M0 2 H16 M0 6.200 H16 M0 10.400 H16 M0 14.600 H16" stroke="#fff2e6" strokeWidth="2" /></svg></MenuButton>
        <Logo>LiveAction<sup>™</sup></Logo>
        <ModeTab $active>NX</ModeTab>
        <ModeTab $active={false}>UX</ModeTab>
        <HeaderActions>
          <Action $w={70} $rule><svg width="17" height="15" viewBox="0 0 17 15"><rect x="1" y="1" width="15" height="9.500" rx="1.500" fill="none" stroke="#bcc3cf" strokeWidth="1.600" /><path d="M4.500 13.500 H12.500 M8.500 10 V13" stroke="#bcc3cf" strokeWidth="2" /></svg></Action>
          <Action $w={71}><ApiText>{'{ API }'}</ApiText></Action>
          <Action $w={71} $rule><FaQuestionCircle size={16} /></Action>
          <Action $w={71}><FaCog size={16} /></Action>
          <Action $w={70} $rule><FaInfoCircle size={16} /></Action>
          <Action $w={108} $rule>
            <svg width="27" height="27" viewBox="0 0 27 27"><circle cx="13.500" cy="13.500" r="13.500" fill="#a9b3c2" /><circle cx="13.500" cy="9.800" r="4.500" fill="#2e3b51" /><path d="M5.500 20.500 Q6 14.500 13.500 14.500 Q21 14.500 21.500 20.500 Z" fill="#2e3b51" /><circle cx="13.500" cy="9.800" r="3" fill="#a9b3c2" /><path d="M8 19 Q9 16 13.500 16 Q18 16 19 19 Z" fill="#a9b3c2" /></svg>
            <UserName>jsmith</UserName>
          </Action>
          <Action $w={68} $rule><FaPowerOff size={16} /></Action>
        </HeaderActions>
      </AppHeader>

      <CrumbBar>
        <BackButton><svg width="10" height="14" viewBox="0 0 10 14"><path d="M8.500 1 L2 7 L8.500 13" fill="none" stroke="#9499ab" strokeWidth="1.600" /></svg></BackButton>
        <Crumb $main>MAIN</Crumb>
        <CrumbArrow $l={12} $r={7} width="7" height="10" viewBox="0 0 7 10"><path d="M1.500 1 L5.500 5 L1.500 9" fill="none" stroke="#6c6e76" strokeWidth="1.600" /></CrumbArrow>
        <Crumb>Sites</Crumb>
        <CrumbArrow $l={11} $r={7.5} width="7" height="10" viewBox="0 0 7 10"><path d="M1.500 1 L5.500 5 L1.500 9" fill="none" stroke="#6c6e76" strokeWidth="1.600" /></CrumbArrow>
        <Crumb>Site: Los_Angeles</Crumb>
        <CrumbRight>
          <RangeText>May 31, 2017 13:50:00 - May 31, 2017 14:50:00</RangeText>
          <Select>Last Hour<svg width="10" height="7" viewBox="0 0 10 7"><path d="M1 1.500 L5 5.500 L9 1.500" fill="none" stroke="#9a9ca3" strokeWidth="1.300" /></svg></Select>
          <Checkbox />
          <span>Auto update</span>
          <ManageFilters>
            <svg width="12" height="13" viewBox="0 0 12 13"><path d="M0 2 H12 M0 6.500 H12 M0 11 H12" stroke="#4a4e60" strokeWidth="1.300" /><path d="M4 0.500 V3.500 M8.500 5 V8 M3.500 9.500 V12.500" stroke="#4a4e60" strokeWidth="2" /></svg>
            Manage Filters
          </ManageFilters>
        </CrumbRight>
      </CrumbBar>

      <Main>
        <LeftPane>
          <Summary>
            <SiteCard>
              <svg width="64" height="64" viewBox="0 0 64 64"><circle cx="32" cy="32" r="32" fill="#f4cd38" /><path d="M32 51 Q19 32 19 25.500 A13 13 0 0 1 45 25.500 Q45 32 32 51 Z" fill="#fff" /><circle cx="32" cy="25" r="6" fill="#f4cd38" /></svg>
              <SiteText>
                <SiteName>Los_Angeles</SiteName>
                <SiteLine>Status:<SiteValue $color="#f6c83c">Warning</SiteValue></SiteLine>
                <SiteLine>Importance:<SiteValue $color="#777b8e">Unspecified</SiteValue></SiteLine>
              </SiteText>
            </SiteCard>
            <Stat><StatValue>1</StatValue><StatLabel>Devices</StatLabel></Stat>
            <Stat><StatValue>8</StatValue><StatLabel>Interfaces</StatLabel></Stat>
            <Stat><StatValue>75</StatValue><StatLabel>WAN Applications</StatLabel></Stat>
            <Stat>
              <StatValue><svg width="30" height="34" viewBox="0 0 30 34"><path d="M2 27.500 Q6.500 23 6.500 15 Q7 5 15 4 Q23 5 23.500 15 Q23.500 23 28 27.500 Z" fill="none" stroke="#34363f" strokeWidth="1.900" strokeLinejoin="round" /><path d="M15 1.500 V4" stroke="#34363f" strokeWidth="2.500" /><path d="M11 28.500 H19 Q18.500 33 15 33 Q11.500 33 11 28.500 Z" fill="#34363f" /></svg></StatValue>
              <StatLabel>Alerts</StatLabel>
            </Stat>
          </Summary>
          <SwapMark $side="right" width="16" height="12" viewBox="0 0 16 12"><Swap /></SwapMark>
          <Scroller>
            <Reports>
              <ActiveLine />
              <Panel $gap={19}>
                <PanelHeader>WAN DSCP (Inbound)<Caret /></PanelHeader>
                <PanelBody>
                  <ChartLegend h={94} items={[['0 (BE)', '#ff8a0a'], ['46 (EF)', '#ffd405'], ['48 (CS6)', '#3f7f47'], ['Total', '#333']]} />
                  <AreaPlot
                    top={520} height={283} axisX={159.5} dataX={180.3} endX={1389.5} zeroY={763} unit={0.2305}
                    values={INBOUND} band={36} labelX={144.5} baseline
                    yTicks={[['1000', 532.5], ['750', 590.5], ['500', 648], ['250', 705.5], ['0', 763]]}
                    xTicks={['13:50', '13:55', '14:00', '14:05', '14:10', '14:15', '14:20', '14:25', '14:30', '14:35', '14:40', '14:45', '14:50']}
                    yTitle="Bit Rate (Kbps)" yTitleY={648}
                  />
                  <TableBox>
                    <TableTools>
                      <SearchBox>
                        <svg width="15" height="15" viewBox="0 0 15 15"><circle cx="6" cy="6" r="4.800" fill="none" stroke="#85888f" strokeWidth="1.700" /><path d="M9.500 9.500 L14 14" stroke="#85888f" strokeWidth="2.200" /></svg>
                        Search
                      </SearchBox>
                      <GearButton><FaCogs size={16} /></GearButton>
                    </TableTools>
                    <HeadRow>
                      <HeadCell>LEGEND <Sort /></HeadCell>
                      <HeadCell>DSCP <Sort /></HeadCell>
                      {COLUMNS.map((c) => <HeadCell key={c} $spread><HeadText>{c}</HeadText><Sort /></HeadCell>)}
                    </HeadRow>
                    {ROWS.map(([color, name, ...nums], i) => (
                      <Row key={name} $shade={i % 2 === 0}>
                        <ColorCell $color={color} />
                        <Cell>{name}</Cell>
                        {nums.map((n) => <Cell key={n} $right>{n}</Cell>)}
                      </Row>
                    ))}
                  </TableBox>
                </PanelBody>
              </Panel>
              <Panel $gap={18}>
                <PanelHeader>WAN DSCP (Outbound)<Caret /></PanelHeader>
                <PanelBody>
                  <ChartLegend h={93} items={[['0 (BE)', '#ff8a0a'], ['46 (EF)', '#ffd405'], ['8 (CS1)', '#3f7f47'], ['Total', '#333']]} />
                  <AreaPlot
                    top={1207} height={200} axisX={148} dataX={169} endX={1389.5} zeroY={1450.7} unit={23.2}
                    values={OUTBOUND} band={0.22} labelX={133}
                    yTicks={[['10', 1218.7], ['7.5', 1276.7], ['5', 1334.7], ['2.5', 1392]]}
                    xTicks={[]}
                    yTitle="Bit Rate (Mbps)" yTitleY={1335}
                  />
                </PanelBody>
              </Panel>
            </Reports>
            <ScrollTrack>
              <svg width="9" height="6" viewBox="0 0 9 6"><path d="M0 6 L4.500 0 L9 6 Z" fill="#828286" /></svg>
              <Thumb />
              <svg width="9" height="6" viewBox="0 0 9 6"><path d="M0 0 L4.500 6 L9 0 Z" fill="#48484c" /></svg>
            </ScrollTrack>
          </Scroller>
        </LeftPane>

        <RightPane>
          <TopologyMap />
          <SwapMark $side="left" width="16" height="12" viewBox="0 0 16 12"><Swap /></SwapMark>
          <RangeBadge>
            <svg width="13" height="14" viewBox="0 0 13 14"><circle cx="6.500" cy="7.500" r="5.300" fill="none" stroke="#8d90ad" strokeWidth="1.500" /><path d="M6.500 4.500 V8 H9 M4.500 1 H8.500" fill="none" stroke="#8d90ad" strokeWidth="1.300" /></svg>
            Last 15 minutes
          </RangeBadge>
          <ZoomStack>
            <ZoomButton><FaPlus size={14} /></ZoomButton>
            <ZoomButton><FaMinus size={14} /></ZoomButton>
            <ZoomButton><FaExpandArrowsAlt size={16} /></ZoomButton>
            <ZoomButton><FaArrowsAlt size={16} /></ZoomButton>
          </ZoomStack>
          <StatusLegend>
            {STATUSES.map(([label, color]) => <StatusItem key={label} $color={color}>{label}</StatusItem>)}
          </StatusLegend>
        </RightPane>
      </Main>

      <Taskbar>
        {TASKS.map((t, i) => <TaskItem key={i} $first={i === 0} $bg={t.bg} $line={t.line}>{t.icon}</TaskItem>)}
        <Clock>2:52 PM</Clock>
      </Taskbar>

      <CursorShape x={409} y={308} w={22} h={38} />
      <CursorShape x={361} y={305} w={22} h={38} />
      <CursorShape x={338} y={302} w={37} h={57} />
    </Screen>
  );
}
